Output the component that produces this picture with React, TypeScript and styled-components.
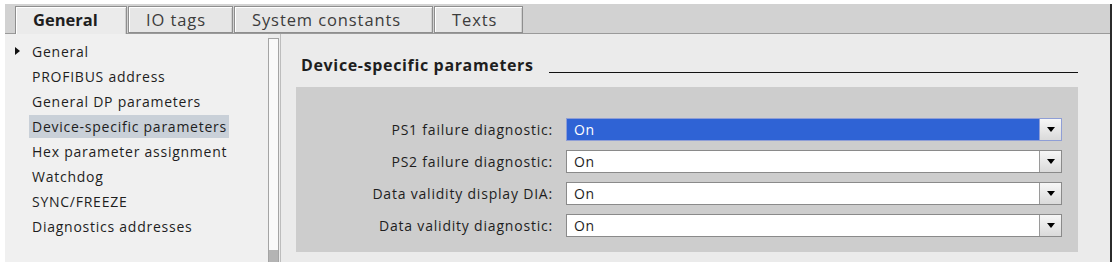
import React from 'react';
import styled, { createGlobalStyle } from 'styled-components';

const GlobalStyle = createGlobalStyle`
  body {
    margin: 0;
    background: #ffffff;
    font-family: 'Open Sans', 'Noto Sans', sans-serif;
    color: #1e1e1e;
  }
`;

const Frame = styled.div`
  margin: 4px 0 0 5px;
  width: 1105px;
  height: 258px;
  border-right: 2px solid #2b2b2b;
  display: flex;
  flex-direction: column;
`;

const TabBar = styled.div`
  height: 30px;
  box-sizing: border-box;
  background: #d2d2d2;
  border-bottom: 1px solid #9a9a9a;
  display: flex;
  align-items: flex-end;
  padding-left: 10px;
`;

const Tab = styled.div<{ $active?: boolean; $width: number }>`
  width: ${(p) => p.$width}px;
  box-sizing: border-box;
  margin-bottom: ${(p) => (p.$active ? '-1px' : '0')};
  height: ${(p) => (p.$active ? '28px' : '27px')};
  padding-left: 17px;
  font-size: 16.5px;
  letter-spacing: ${(p) => (p.$active ? '0' : '0.9px')};
  line-height: 25px;
  white-space: nowrap;
  font-weight: ${(p) => (p.$active ? 700 : 400)};
  color: ${(p) => (p.$active ? '#1e1e1e' : '#3c3c3c')};
  background: ${(p) => (p.$active ? '#ebebeb' : '#e6e6e6')};
  border: 1px solid #8e8e8e;
  border-bottom: ${(p) => (p.$active ? 'none' : '1px solid #8e8e8e')};
  box-shadow: inset 1px 1px 0 #ffffff, inset -1px 0 0 #cfcfcf;
  & + & {
    margin-left: 1px;
  }
`;

const Body = styled.div`
  flex: 1;
  display: flex;
  min-height: 0;
`;

const Sidebar = styled.div`
  width: 263px;
  background: #f0f0f0;
  padding-top: 6px;
  box-sizing: border-box;
`;

const NavItem = styled.div`
  position: relative;
  height: 23px;
  margin: 0 0 2px 24px;
  display: flex;
  align-items: center;
`;

const NavLabel = styled.span<{ $selected?: boolean }>`
  display: inline-block;
  font-size: 14px;
  letter-spacing: 0.75px;
  line-height: 23px;
  padding: 0 2px 0 3px;
  white-space: nowrap;
  color: #1e1e1e;
  background: ${(p) => (p.$selected ? '#c9d0d8' : 'transparent')};
`;

const Caret = styled.span`
  position: absolute;
  left: -14px;
  top: 7px;
  width: 0;
  height: 0;
  border-top: 4px solid transparent;
  border-bottom: 4px solid transparent;
  border-left: 5px solid #111;
`;

const ScrollColumn = styled.div`
  width: 12px;
  background: #ececec;
  padding-top: 4px;
  box-sizing: border-box;
  display: flex;
`;

const ScrollTrack = styled.div`
  width: 11px;
  box-sizing: border-box;
  border: 1px solid #a4a4a4;
  border-bottom: none;
  background: #f9f9f9;
  display: flex;
  flex-direction: column;
  justify-content: flex-end;
`;

const ScrollThumb = styled.div`
  height: 12px;
  background: #b4b4b4;
`;

const Main = styled.div`
  flex: 1;
  background: #ebebeb;
  padding: 0 32px 0 15px;
  border-left: 1px solid #bdbdbd;
`;

const HeadingRow = styled.div`
  display: flex;
  align-items: center;
  height: 53px;
  box-sizing: border-box;
  padding: 8px 0 0 5px;
`;

const Heading = styled.h2`
  margin: 0;
  font-size: 16px;
  letter-spacing: 0.65px;
  font-weight: 700;
  color: #1e1e1e;
  white-space: nowrap;
`;

const HeadingRule = styled.div`
  flex: 1;
  height: 0;
  border-top: 1.5px solid #111;
  margin: 16px 0 0 15px;
`;

const GroupBox = styled.div`
  background: #cdcdcd;
  height: 165px;
  box-sizing: border-box;
  padding: 31px 16px 0 0;
  display: grid;
  grid-template-columns: 257px 1fr;
  column-gap: 13px;
  row-gap: 9px;
  align-content: start;
`;

const FieldLabel = styled.div`
  font-size: 14px;
  letter-spacing: 0.8px;
  line-height: 23px;
  text-align: right;
  white-space: nowrap;
  color: #1e1e1e;
`;

const Select = styled.div<{ $focused?: boolean }>`
  height: 23px;
  box-sizing: border-box;
  display: flex;
  border: 1px solid ${(p) => (p.$focused ? '#8f9ed6' : '#8a8a8a')};
  background: ${(p) => (p.$focused ? '#2f63d5' : '#ffffff')};
`;

const SelectValue = styled.div<{ $focused?: boolean }>`
  flex: 1;
  padding-left: 7px;
  font-size: 14px;
  letter-spacing: 0.6px;
  line-height: 21px;
  color: ${(p) => (p.$focused ? '#ffffff' : '#1e1e1e')};
`;

const SelectButton = styled.div<{ $focused?: boolean }>`
  width: 21px;
  background: linear-gradient(#f7f7f7, #dadada);
  border-left: 1px solid ${(p) => (p.$focused ? '#8f9ed6' : '#9a9a9a')};
  display: flex;
  align-items: center;
  justify-content: center;
`;

const Arrow = styled.span`
  width: 0;
  height: 0;
  border-left: 4px solid transparent;
  border-right: 4px solid transparent;
  border-top: 5px solid #000;
`;

const tabs = [
  { label: 'General', width: 112, active: true },
  { label: 'IO tags', width: 105 },
  { label: 'System constants', width: 199 },
  { label: 'Texts', width: 89 },
];

const navItems = [
  'General',
  'PROFIBUS address',
  'General DP parameters',
  'Device-specific parameters',
  'Hex parameter assignment',
  'Watchdog',
  'SYNC/FREEZE',
  'Diagnostics addresses',
];

const params = [
  'PS1 failure diagnostic:',
  'PS2 failure diagnostic:',
  'Data validity display DIA:',
  'Data validity diagnostic:',
];

const App = () => {
  return (
    <>
      <GlobalStyle />
      <Frame>
        <TabBar>
          {tabs.map((t) => (
            <Tab key={t.label} $active={t.active} $width={t.width}>
              {t.label}
            </Tab>
          ))}
        </TabBar>
        <Body>
          <Sidebar>
            {navItems.map((item, i) => (
              <NavItem key={item}>
                {i === 0 && <Caret />}
                <NavLabel $selected={item === 'Device-specific parameters'}>{item}</NavLabel>
              </NavItem>
            ))}
          </Sidebar>
          <ScrollColumn>
            <ScrollTrack>
              <ScrollThumb />
            </ScrollTrack>
          </ScrollColumn>
          <Main>
            <HeadingRow>
              <Heading>Device-specific parameters</Heading>
              <HeadingRule />
            </HeadingRow>
            <GroupBox>
              {params.map((label, i) => (
                <React.Fragment key={label}>
                  <FieldLabel>{label}</FieldLabel>
                  <Select $focused={i === 0}>
                    <SelectValue $focused={i === 0}>On</SelectValue>
                    <SelectButton $focused={i === 0}>
                      <Arrow />
                    </SelectButton>
                  </Select>
                </React.Fragment>
              ))}
            </GroupBox>
          </Main>
        </Body>
      </Frame>
    </>
  );
};

export default App;
